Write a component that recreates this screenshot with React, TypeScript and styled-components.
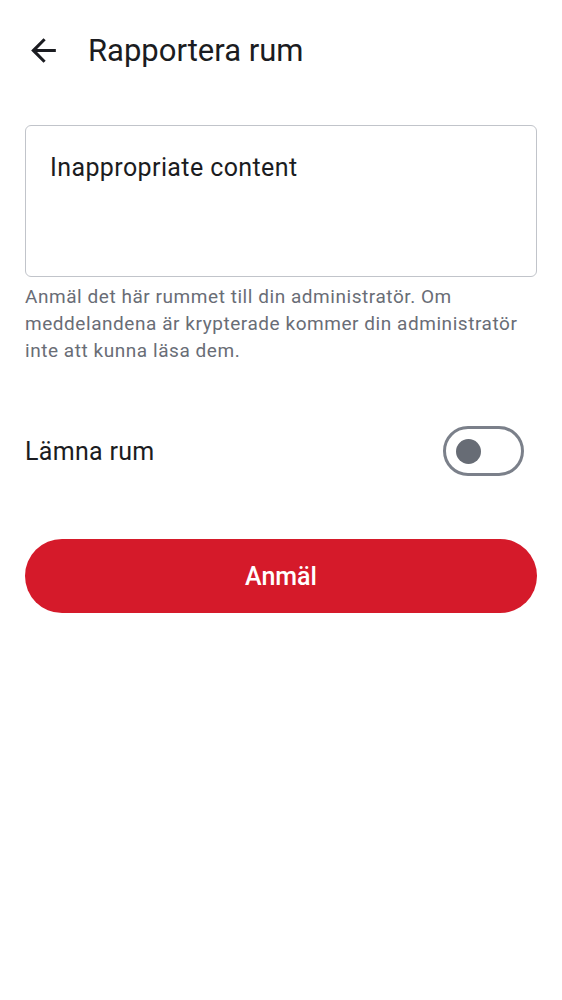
import React, { useState } from "react";
import styled, { createGlobalStyle } from "styled-components";

const Global = createGlobalStyle`
  html, body { margin: 0; padding: 0; background: #ffffff; }
  body { font-family: Roboto, "Noto Sans", sans-serif; -webkit-font-smoothing: antialiased; }
  * { box-sizing: border-box; }
`;

const Page = styled.div`
  width: 562px;
  min-height: 1000px;
  background: #ffffff;
  display: flex;
  flex-direction: column;
`;

const Header = styled.header`
  height: 100px;
  display: flex;
  align-items: center;
  padding: 0 25px;
  gap: 26px;
`;

const BackButton = styled.button`
  width: 37px;
  height: 37px;
  padding: 0;
  border: none;
  background: transparent;
  display: flex;
  align-items: center;
  justify-content: center;
  color: #1b1c21;
  cursor: pointer;
`;

const Title = styled.h1`
  margin: 0;
  font-size: 31px;
  font-weight: 400;
  color: #1b1c21;
  letter-spacing: 0;
`;

const Content = styled.main`
  padding: 25px 25px 0;
  display: flex;
  flex-direction: column;
`;

const TextArea = styled.textarea`
  width: 512px;
  height: 152px;
  border: 1.5px solid #c1c4ca;
  border-radius: 6px;
  padding: 26px 24px 20px;
  font-family: Roboto, sans-serif;
  font-size: 25px;
  letter-spacing: 0.4px;
  line-height: 32px;
  color: #1b1c21;
  resize: none;
  outline: none;
  background: #fff;
`;

const Helper = styled.p`
  margin: 6px 0 0;
  padding-right: 12px;
  font-size: 19px;
  line-height: 27px;
  color: #696d76;
  letter-spacing: 0.55px;
`;

const ToggleRow = styled.div`
  margin-top: 62px;
  height: 50px;
  display: flex;
  align-items: center;
  justify-content: space-between;
  padding-right: 13px;
`;

const Label = styled.span`
  font-size: 25px;
  letter-spacing: 0.3px;
  color: #1b1c21;
`;

const Switch = styled.button<{ $on: boolean }>`
  width: 81px;
  height: 50px;
  border-radius: 25px;
  border: 3px solid ${(p) => (p.$on ? "#d51a2a" : "#7b808a")};
  background: ${(p) => (p.$on ? "#d51a2a" : "#ffffff")};
  padding: 0;
  position: relative;
  cursor: pointer;
`;

const Thumb = styled.span<{ $on: boolean }>`
  position: absolute;
  top: 50%;
  left: ${(p) => (p.$on ? "46px" : "10px")};
  width: 25px;
  height: 25px;
  margin-top: -12.5px;
  border-radius: 50%;
  background: ${(p) => (p.$on ? "#ffffff" : "#676c75")};
`;

const SubmitButton = styled.button`
  margin-top: 63px;
  height: 74px;
  border: none;
  border-radius: 37px;
  background: #d51a2a;
  color: #ffffff;
  font-family: Roboto, sans-serif;
  font-size: 25px;
  font-weight: 500;
  cursor: pointer;
`;

const ArrowBack = () => (
  <svg width="37" height="37" viewBox="0 0 24 24" fill="currentColor" aria-hidden="true">
    <path d="M20 11H7.83l5.59-5.59L12 4l-8 8 8 8 1.41-1.41L7.83 13H20v-2z" />
  </svg>
);

export default function App() {
  const [on, setOn] = useState(false);
  return (
    <>
      <Global />
      <Page>
        <Header>
          <BackButton aria-label="Tillbaka">
            <ArrowBack />
          </BackButton>
          <Title>Rapportera rum</Title>
        </Header>
        <Content>
          <TextArea defaultValue="Inappropriate content" />
          <Helper>
            Anmäl det här rummet till din administratör. Om meddelandena är krypterade kommer din
            administratör inte att kunna läsa dem.
          </Helper>
          <ToggleRow>
            <Label>Lämna rum</Label>
            <Switch $on={on} onClick={() => setOn(!on)} aria-label="Lämna rum">
              <Thumb $on={on} />
            </Switch>
          </ToggleRow>
          <SubmitButton>Anmäl</SubmitButton>
        </Content>
      </Page>
    </>
  );
}
